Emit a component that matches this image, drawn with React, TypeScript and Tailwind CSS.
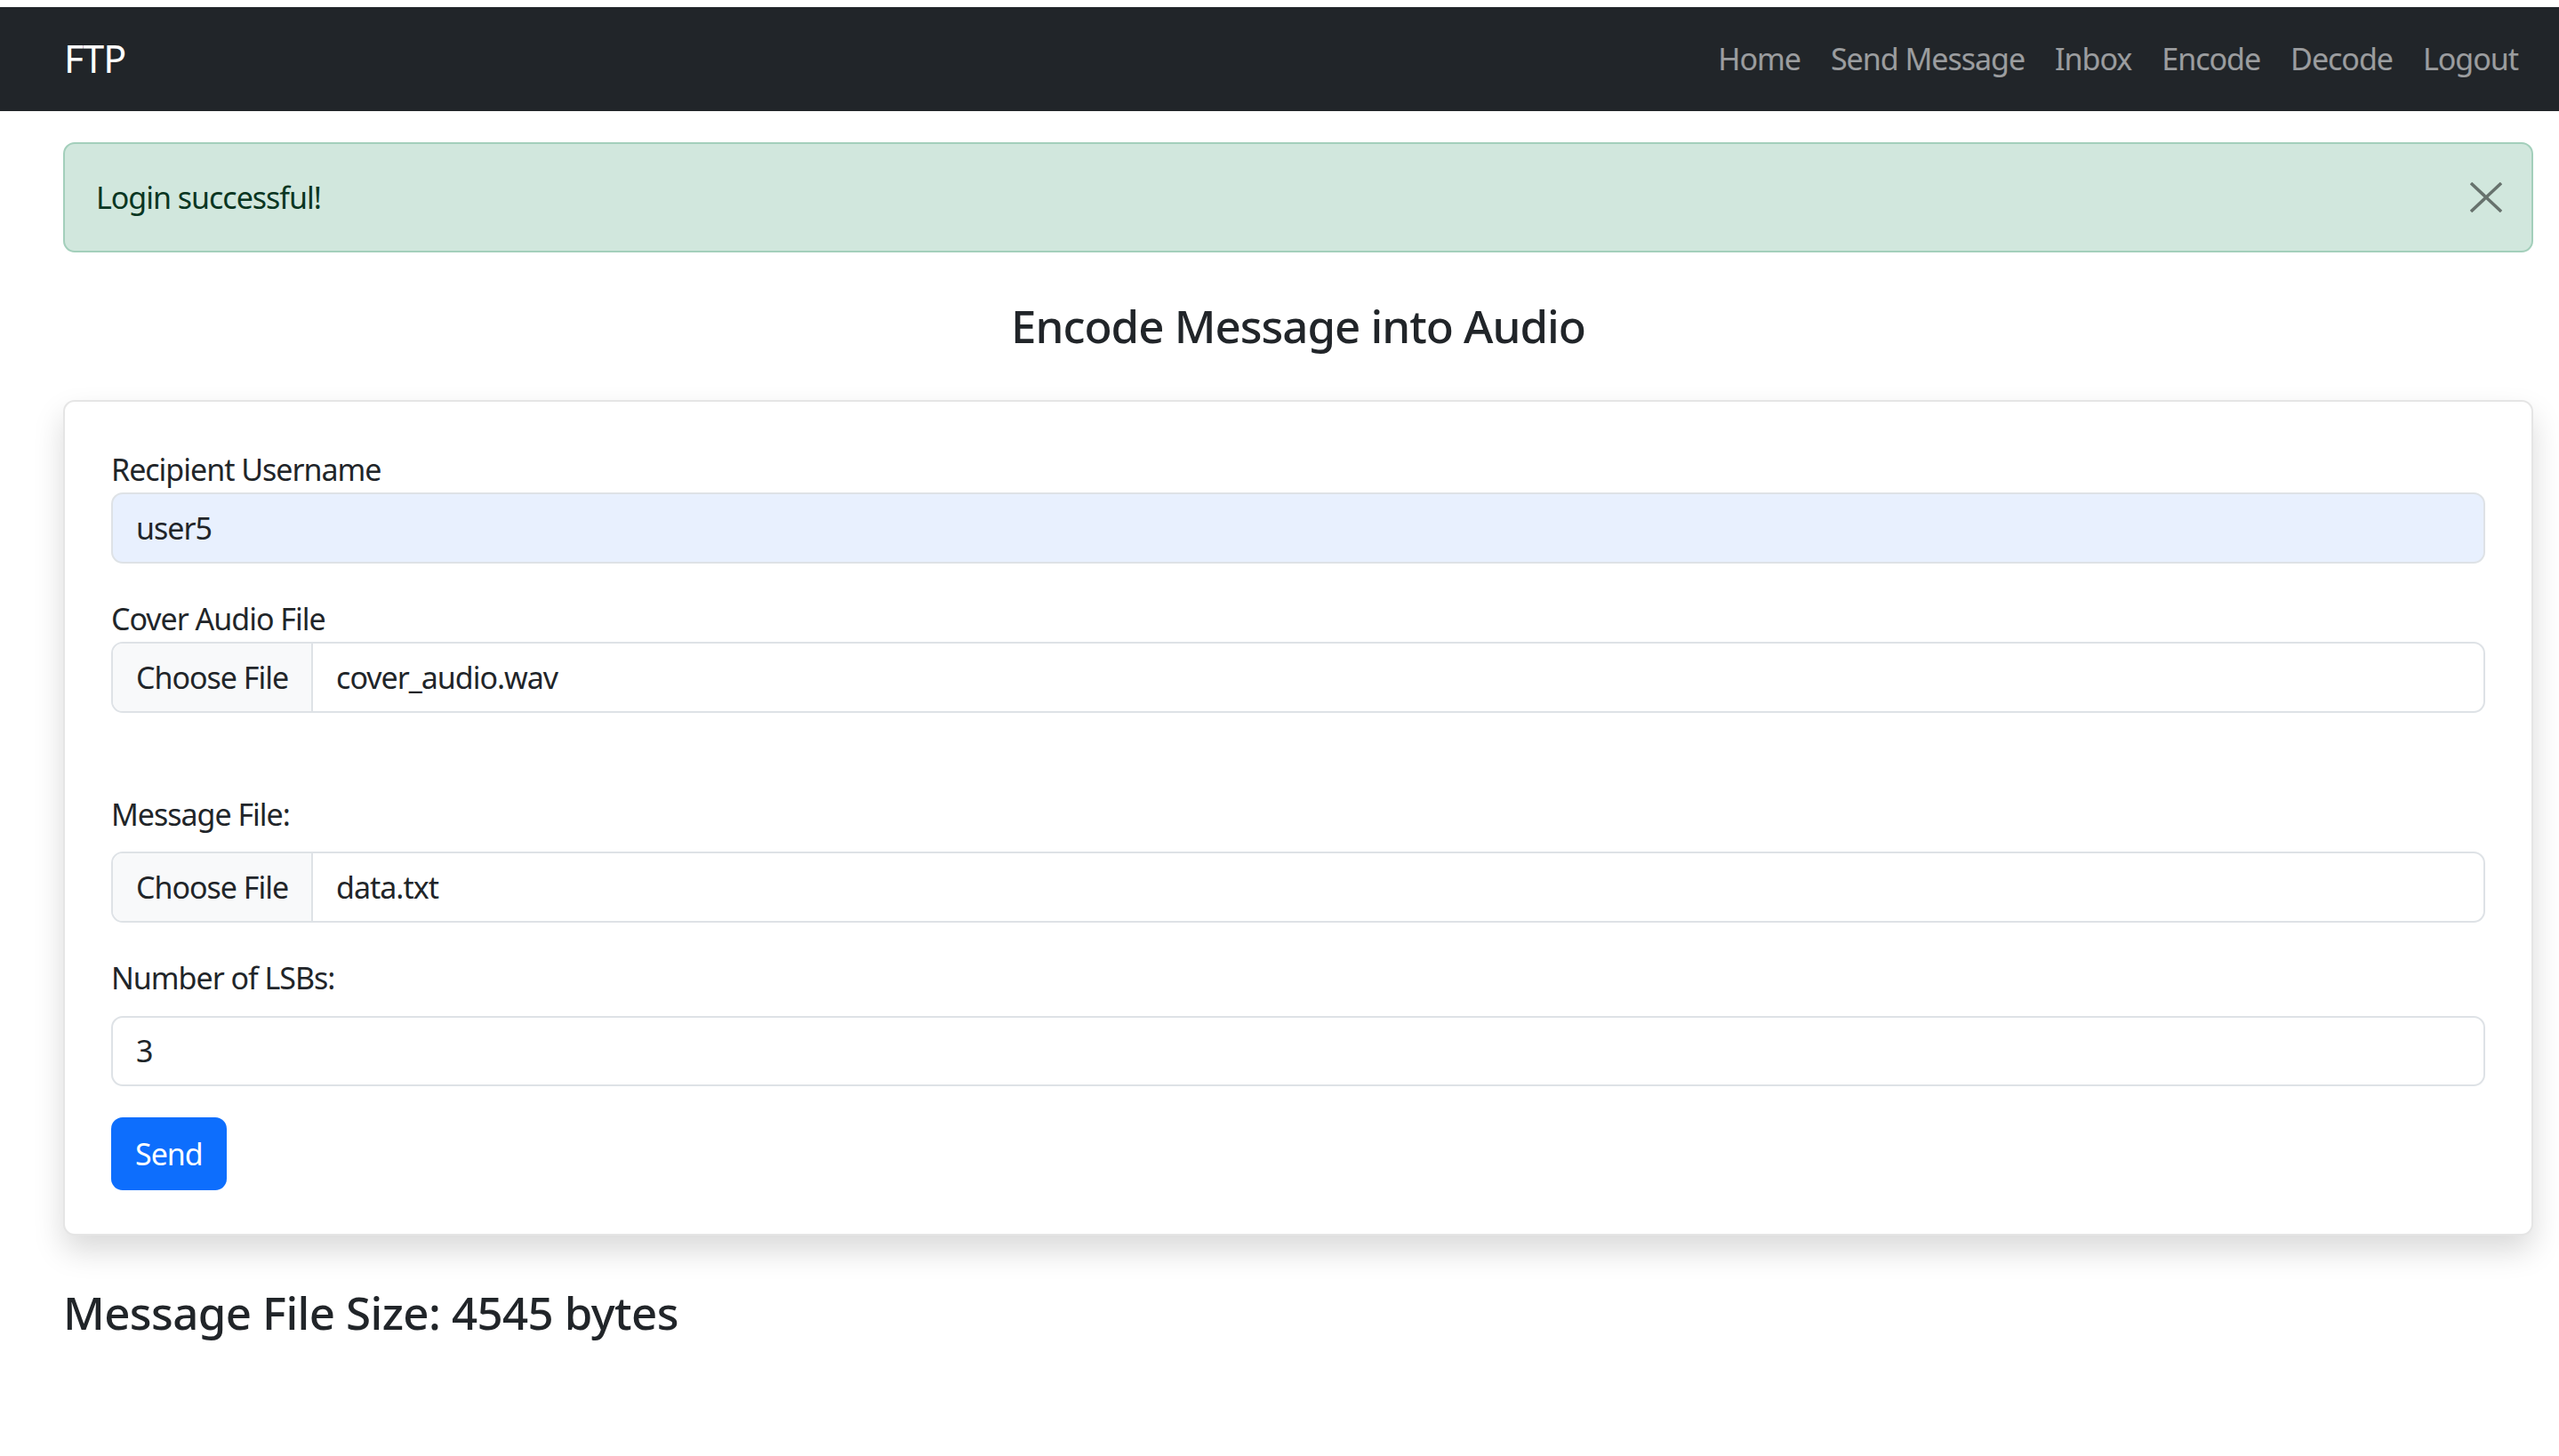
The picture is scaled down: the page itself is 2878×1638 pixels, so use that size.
const links = ["Home", "Send Message", "Inbox", "Encode", "Decode", "Logout"];

function FileInput({ name }: { name: string }) {
  return (
    <div className="flex h-[80px] items-stretch overflow-hidden rounded-[13px] border-2 border-[#dee2e6] bg-white">
      <div className="flex items-center border-r-2 border-[#dee2e6] bg-[#f8f9fa] px-[26px]">Choose File</div>
      <div className="flex items-center px-[26px]">{name}</div>
    </div>
  );
}

export default function App() {
  return (
    <div className="min-h-screen bg-white pt-[8px] font-['Noto_Sans',sans-serif] text-[34px] tracking-[-0.03em] text-[#212529]">
      <nav className="flex h-[117px] items-center justify-between bg-[#212529] pl-[72px] pr-[29px]">
        <span className="text-[43px] text-white">FTP</span>
        <div className="flex">
          {links.map((l) => (
            <span key={l} className="px-[17px] text-[34px] text-white/55">
              {l}
            </span>
          ))}
        </div>
      </nav>

      <main className="ml-[71px] mr-[29px]">
        <div className="mt-[35px] flex h-[124px] items-center justify-between rounded-[13px] border-2 border-[#a3cfbb] bg-[#d1e7dd] pl-[35px] pr-[33px] text-[#0a3622]">
          <span>Login successful!</span>
          <svg width="36" height="34" viewBox="0 0 36 34" className="opacity-50">
            <path d="M1 1 L35 33 M35 1 L1 33" stroke="#000" strokeWidth="3.5" fill="none" />
          </svg>
        </div>

        <h4 className="mt-[52px] text-center text-[51px] font-medium leading-[61px] tracking-[-0.02em]">Encode Message into Audio</h4>

        <div className="mt-[53px] rounded-[13px] border-2 border-black/10 bg-white px-[52px] pb-[49px] pt-[51px] shadow-[0_17px_34px_rgba(0,0,0,0.15)]">
          <label className="block leading-[51px]">Recipient Username</label>
          <div className="flex h-[80px] items-center rounded-[13px] border-2 border-[#dee2e6] bg-[#e8f0fe] px-[26px]">user5</div>

          <label className="mt-[37px] block leading-[51px]">Cover Audio File</label>
          <FileInput name="cover_audio.wav" />

          <label className="mt-[89px] mb-[16px] block leading-[51px]">Message File:</label>
          <FileInput name="data.txt" />

          <label className="mt-[37px] mb-[17px] block leading-[51px]">Number of LSBs:</label>
          <div className="flex h-[79px] items-center rounded-[13px] border-2 border-[#dee2e6] bg-white px-[26px]">3</div>

          <button className="mt-[35px] h-[82px] rounded-[13px] bg-[#0d6efd] px-[27px] text-white">Send</button>
        </div>

        <h4 className="mt-[56px] text-[51px] font-medium leading-[61px] tracking-[-0.012em]">Message File Size: 4545 bytes</h4>
      </main>
    </div>
  );
}
